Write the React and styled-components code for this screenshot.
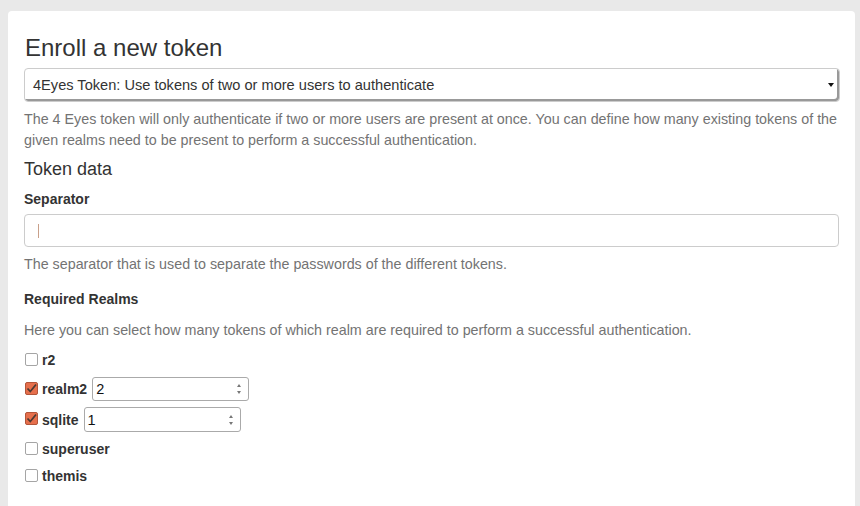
import React from 'react';
import styled, { createGlobalStyle } from 'styled-components';

const GlobalStyle = createGlobalStyle`
  html, body {
    margin: 0;
    padding: 0;
    background: #e9e9e9;
    font-family: "Liberation Sans", Arial, sans-serif;
    font-size: 14px;
    color: #333;
  }
`;

const Card = styled.div`
  margin: 11px 5px 0 8px;
  min-height: 495px;
  background: #fff;
  border-radius: 4px 4px 0 0;
  padding: 0 16px 0 16px;
  box-sizing: border-box;
`;

const Title = styled.h3`
  margin: 0;
  padding-top: 22px;
  font-size: 24px;
  font-weight: 400;
  line-height: 30px;
  color: #333;
  padding-left: 1px;
`;

const SelectBox = styled.div`
  margin-top: 5px;
  height: 34px;
  width: 816px;
  box-sizing: border-box;
  border: 1px solid #ccc;
  border-radius: 4px;
  box-shadow: inset -2px -2px 0 #999;
  display: flex;
  align-items: center;
  padding: 0 5px 0 8px;
  font-size: 14.6px;
  color: #333;
`;

const SelectText = styled.span`
  flex: 1;
`;

const Caret = styled.span`
  width: 0;
  height: 0;
  border-left: 3px solid transparent;
  border-right: 3px solid transparent;
  border-top: 4px solid #111;
`;

const Help = styled.p`
  margin: ${(p) => p.$top || 7}px 0 0 0;
  color: #737373;
  font-size: 14.3px;
  line-height: 21px;
`;

const SubTitle = styled.h4`
  margin: 7px 0 0 0;
  font-size: 18px;
  font-weight: 400;
  line-height: 22px;
  color: #333;
`;

const Label = styled.div`
  margin-top: ${(p) => p.$top}px;
  font-weight: 700;
  font-size: 14px;
  line-height: 20px;
  color: #333;
`;

const TextInput = styled.div`
  margin-top: 5px;
  height: 33px;
  width: 815px;
  box-sizing: border-box;
  border: 1px solid #ccc;
  border-radius: 4px;
  display: flex;
  align-items: center;
  padding-left: 13px;
`;

const CaretLine = styled.span`
  width: 1px;
  height: 14px;
  background: #c9a08a;
`;

const RealmList = styled.div`
  margin-top: 9px;
  display: flex;
  flex-direction: column;
`;

const Row = styled.label`
  display: flex;
  align-items: center;
  min-height: 20px;
  margin-top: ${(p) => p.$gap}px;
  padding-left: 1px;
  font-weight: 700;
  font-size: 14px;
  color: #333;
`;

const Box = styled.span`
  width: 11px;
  height: 11px;
  border: 1px solid ${(p) => (p.$checked ? '#b2553a' : '#a5a5a5')};
  background: ${(p) => (p.$checked ? '#e66f4c' : '#fff')};
  border-radius: 2px;
  display: flex;
  align-items: center;
  justify-content: center;
  margin-right: 4px;
  margin-top: -2px;
`;

const Spin = styled.div`
  margin-left: 5px;
  width: 157px;
  height: ${(p) => p.$h}px;
  box-sizing: border-box;
  border: 1px solid #aaa;
  border-radius: 3px;
  display: flex;
  align-items: center;
  padding: 0 7px 0 3px;
  font-weight: 400;
  font-size: 14.5px;
  color: #111;
`;

const SpinValue = styled.span`
  flex: 1;
`;

const Arrows = styled.span`
  display: flex;
  flex-direction: column;
  gap: 4px;
`;

const Arrow = styled.span`
  width: 0;
  height: 0;
  border-left: 2.5px solid transparent;
  border-right: 2.5px solid transparent;
  ${(p) => (p.$up ? 'border-bottom: 3px solid #777;' : 'border-top: 3px solid #777;')}
`;

const realms = [
  { name: 'r2', checked: false, gap: 0 },
  { name: 'realm2', checked: true, value: '2', gap: 7, h: 24 },
  { name: 'sqlite', checked: true, value: '1', gap: 6, h: 25 },
  { name: 'superuser', checked: false, gap: 7 },
  { name: 'themis', checked: false, gap: 7 },
];

const Check = () => (
  <svg width="11" height="11" viewBox="0 0 11 11">
    <path d="M1.5 5.5 L4.3 8.5 L10 1.5" fill="none" stroke="#4a3a33" strokeWidth="1.8" />
  </svg>
);

export default function App() {
  return (
    <>
      <GlobalStyle />
      <Card>
        <Title>Enroll a new token</Title>
        <SelectBox>
          <SelectText>4Eyes Token: Use tokens of two or more users to authenticate</SelectText>
          <Caret />
        </SelectBox>
        <Help>
          The 4 Eyes token will only authenticate if two or more users are present at once. You can define how many existing tokens of the
          given realms need to be present to perform a successful authentication.
        </Help>
        <SubTitle>Token data</SubTitle>
        <Label $top={9}>Separator</Label>
        <TextInput>
          <CaretLine />
        </TextInput>
        <Help $top={7}>The separator that is used to separate the passwords of the different tokens.</Help>
        <Label $top={14}>Required Realms</Label>
        <Help $top={11}>Here you can select how many tokens of which realm are required to perform a successful authentication.</Help>
        <RealmList>
          {realms.map((r) => (
            <Row key={r.name} $gap={r.gap}>
              <Box $checked={r.checked}>{r.checked && <Check />}</Box>
              {r.name}
              {r.value && (
                <Spin $h={r.h}>
                  <SpinValue>{r.value}</SpinValue>
                  <Arrows>
                    <Arrow $up />
                    <Arrow />
                  </Arrows>
                </Spin>
              )}
            </Row>
          ))}
        </RealmList>
      </Card>
    </>
  );
}
